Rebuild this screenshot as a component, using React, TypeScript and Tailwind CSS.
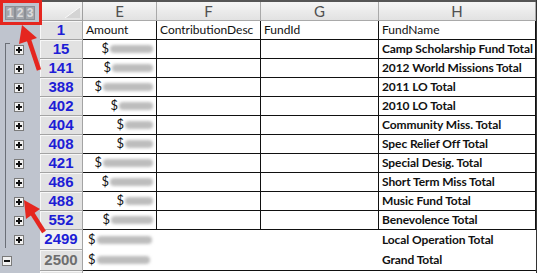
import React from "react"

const rows = [
    { n: "15", blob: 43, name: "Camp Scholarship Fund Total" },
    { n: "141", blob: 41, name: "2012 World Missions Total" },
    { n: "388", blob: 50, name: "2011 LO Total" },
    { n: "402", blob: 34, name: "2010 LO Total" },
    { n: "404", blob: 28, name: "Community Miss. Total" },
    { n: "408", blob: 28, name: "Spec Relief Off Total" },
    { n: "421", blob: 50, name: "Special Desig. Total" },
    { n: "486", blob: 43, name: "Short Term Miss Total" },
    { n: "488", blob: 28, name: "Music Fund Total" },
    { n: "552", blob: 42, name: "Benevolence Total" },
]

function PlusBox({ minus }: { minus?: boolean }) {
    return (
        <svg width="10" height="10" viewBox="0 0 10 10" className="shrink-0">
            <rect x="0.5" y="0.5" width="9" height="9" fill="#f1f1f1" stroke="#7a7a7a" />
            <rect x="2" y="4" width="6" height="2" fill="#111" />
            {!minus && <rect x="4" y="2" width="2" height="6" fill="#111" />}
        </svg>
    )
}

function Amount({ blob }: { blob: number }) {
    return (
        <div className="flex items-center justify-end gap-[1px] pr-[3px]">
            <span className="text-[13px] text-[#111]">$</span>
            <div className="h-[8px] rounded-sm bg-[#bdbdbd] blur-[1.5px]" style={{ width: blob }} />
        </div>
    )
}

function RowHead({ n, gray }: { n: string; gray?: boolean }) {
    return (
        <div
            className={`w-[43px] shrink-0 flex items-center justify-center border-b border-r border-[#a3a3a3] bg-[#e2e2e2] shadow-[inset_1px_1px_0_#f7f7f7] font-['Liberation_Sans',sans-serif] font-bold text-[15px] ${
                gray ? "text-[#6e6e6e]" : "text-[#1d1dd6]"
            }`}
        >
            {n}
        </div>
    )
}

export default function App() {
    const cell = "border-r border-b border-[#111] flex items-center"
    return (
        <div className="relative w-[542px] h-[273px] overflow-hidden bg-white font-['Lato','Liberation_Sans',sans-serif] text-[12px] text-[#111]">
            <div className="w-[537px] border-r border-[#333]">
                {/* column letters */}
                <div className="flex h-[21px] border-t-2 border-[#555]">
                    <div className="w-[40px] shrink-0 bg-[#bfc4ce] flex items-start pt-[4px] pl-[5px] gap-0">
                        {["1", "2", "3"].map((d) => (
                            <div
                                key={d}
                                className="w-[10px] h-[14px] bg-[#a3a6ac] border border-[#8c8f95] flex items-center justify-center text-[12px] font-bold text-[#dcdcdc] font-['Liberation_Sans',sans-serif]"
                            >
                                {d}
                            </div>
                        ))}
                    </div>
                    <div className="w-[43px] shrink-0 relative bg-gradient-to-b from-[#f5f5f5] to-[#e2e2e2] border-b border-r border-[#a0a0a0] flex items-end justify-end pr-[2px] pb-[2px]">
                        <svg width="15" height="11" viewBox="0 0 15 11">
                            <polygon points="15,0 15,11 0,11" fill="#d4d4d4" />
                            <polyline points="0,11 15,0" stroke="#fafafa" strokeWidth="1" fill="none" />
                        </svg>
                    </div>
                    {[
                        ["E", 74],
                        ["F", 104],
                        ["G", 118],
                        ["H", 157],
                    ].map(([l, w]) => (
                        <div
                            key={l}
                            className="shrink-0 bg-gradient-to-b from-[#f5f5f5] to-[#e2e2e2] border-b border-r border-[#a9a9a9] flex items-center justify-center text-[15px] text-[#505050]"
                            style={{ width: w as number }}
                        >
                            {l}
                        </div>
                    ))}
                </div>

                {/* header row */}
                <div className="flex h-[19px]">
                    <div className="w-[40px] shrink-0 bg-[#bfc4ce]" />
                    <RowHead n="1" />
                    <div className={`w-[74px] ${cell} pl-[3px]`}>Amount</div>
                    <div className={`w-[104px] ${cell} pl-[3px]`}>ContributionDesc</div>
                    <div className={`w-[118px] ${cell} pl-[3px]`}>FundId</div>
                    <div className={`w-[157px] ${cell} pl-[3px]`}>FundName</div>
                </div>

                {rows.map((r, i) => (
                    <div key={r.n} className="flex h-[19px]">
                        <div className="w-[40px] shrink-0 bg-[#bfc4ce] flex">
                            <div
                                className={`ml-[5px] w-[5px] border-l border-[#6b6f77] ${
                                    i === 0 ? "mt-[3px] border-t" : ""
                                }`}
                            />
                            <div className="ml-[4px] self-center">
                                <PlusBox />
                            </div>
                        </div>
                        <RowHead n={r.n} />
                        <div className={`w-[74px] ${cell} justify-end`}>
                            <Amount blob={r.blob} />
                        </div>
                        <div className={`w-[104px] ${cell}`} />
                        <div className={`w-[118px] ${cell}`} />
                        <div className={`w-[157px] ${cell} pl-[3px] font-bold tracking-[-0.1px]`}>{r.name}</div>
                    </div>
                ))}

                {/* totals */}
                <div className="flex h-[20px]">
                    <div className="w-[40px] shrink-0 bg-[#bfc4ce] flex">
                        <div className="ml-[5px] mb-[2px] w-[5px] border-l border-[#6b6f77]" />
                        <div className="ml-[4px] self-center">
                            <PlusBox />
                        </div>
                    </div>
                    <div className="w-[43px] shrink-0 flex items-center justify-center border-b border-r border-[#a3a3a3] bg-[#f1f1f1] font-['Liberation_Sans',sans-serif] font-bold text-[15px] text-[#1d1dd6]">
                        2499
                    </div>
                    <div className="w-[296px] flex items-center pl-[5px]">
                        <span className="text-[13px]">$</span>
                        <div className="ml-[1px] h-[8px] w-[55px] rounded-sm bg-[#bdbdbd] blur-[1.5px]" />
                    </div>
                    <div className="w-[157px] flex items-center pl-[3px] font-bold tracking-[-0.1px]">Local Operation Total</div>
                </div>
                <div className="flex h-[21px]">
                    <div className="w-[40px] shrink-0 bg-[#bfc4ce] flex items-center pl-[2px]">
                        <PlusBox minus />
                    </div>
                    <RowHead n="2500" gray />
                    <div className="w-[296px] flex items-center pl-[5px] border-b border-[#111]">
                        <span className="text-[13px]">$</span>
                        <div className="ml-[1px] h-[8px] w-[53px] rounded-sm bg-[#bdbdbd] blur-[1.5px]" />
                    </div>
                    <div className="w-[157px] flex items-center pl-[3px] font-bold tracking-[-0.1px] border-b border-[#111]">
                        Grand Total
                    </div>
                </div>
                <div className="flex h-[19px]">
                    <div className="w-[40px] shrink-0 bg-[#bfc4ce]" />
                    <RowHead n="" />
                </div>
            </div>

            {/* annotations */}
            <svg className="absolute inset-0 pointer-events-none" width="542" height="273" viewBox="0 0 542 273">
                <rect x="1.5" y="1.5" width="39" height="22" fill="none" stroke="#e5261f" strokeWidth="3" />
                <line x1="39" y1="70" x2="29" y2="40" stroke="#e5261f" strokeWidth="4.5" />
                <polygon points="22,25 37,38 19,44" fill="#e5261f" />
                <line x1="44" y1="232" x2="32" y2="213" stroke="#e5261f" strokeWidth="4.5" />
                <polygon points="24,200 40,209 26,219" fill="#e5261f" />
            </svg>
        </div>
    )
}
